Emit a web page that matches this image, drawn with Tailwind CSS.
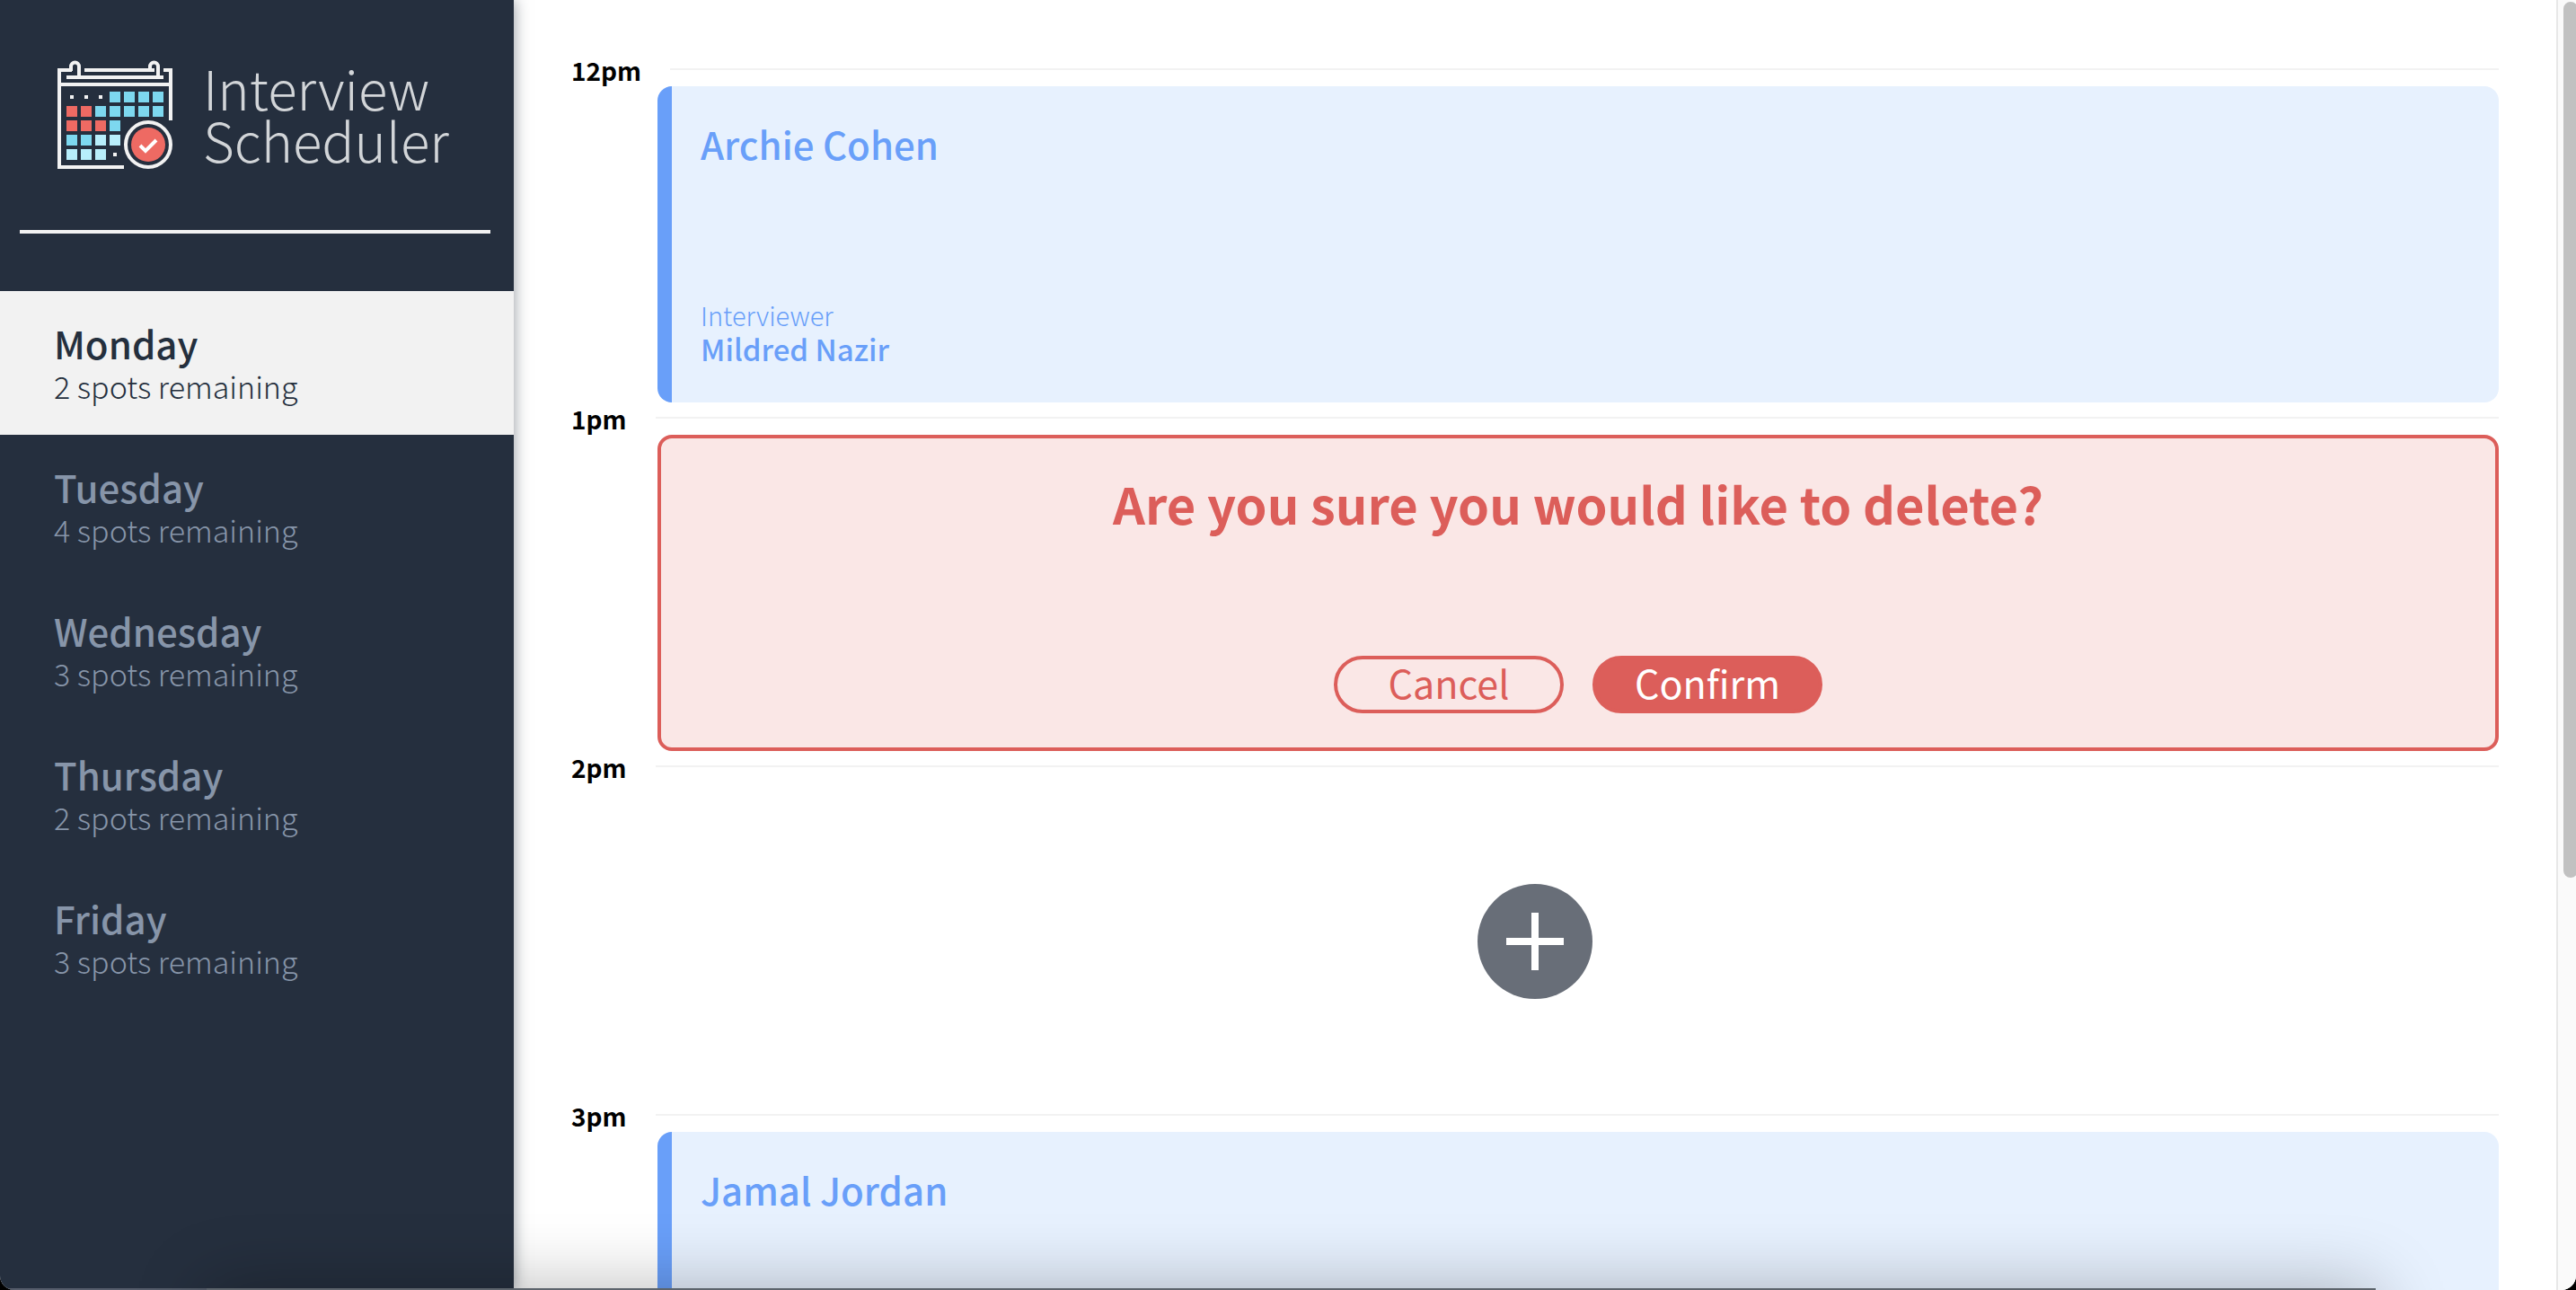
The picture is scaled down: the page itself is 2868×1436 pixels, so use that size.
<!DOCTYPE html>
<html lang="en">
<head>
<meta charset="utf-8">
<title>Interview Scheduler</title>
<script src="https://cdn.jsdelivr.net/npm/@tailwindcss/browser@4"></script>
</head>
<body class="h-screen overflow-hidden bg-black font-['Noto_Sans_CJK_SC',sans-serif] text-[#242f3d]">
<div class="relative flex h-full overflow-hidden rounded-b-2xl bg-white">
  <aside class="z-10 flex w-[572px] shrink-0 flex-col border-b-2 border-[#565d6b] bg-[#252f3e] shadow-[0_0_16px_rgba(37,47,62,0.5)]">
    <a href="#" class="flex gap-[34px] px-16 pt-[66px] text-[#d2d5d8]">
      <svg class="h-[124px] w-32 shrink-0" viewBox="64 66 128 124" role="img" aria-label="Calendar" fill="none">
        <g stroke="#f2f2f2" stroke-width="4">
          <path d="M94 78H172M182 78H190V134M64 78H80M66 76V186H138M74 86H182M68 94H190"/>
          <path d="M79 79V74a4.500 4.500 0 0 1 9 0V86M167 79V74a4.500 4.500 0 0 1 9 0V86"/>
          <circle cx="165" cy="161" r="25"/>
        </g>
        <path fill="#f2f2f2" d="M78 106h4v4h-4zM94 106h4v4h-4zM110 106h4v4h-4zM126 170h4v4h-4z"/>
        <path fill="#7dd8ef" d="M122 102h12v12h-12zM138 102h12v12h-12zM154 102h12v12h-12zM170 102h12v12h-12zM106 118h12v12h-12zM122 118h12v12h-12zM138 118h12v12h-12zM154 118h12v12h-12zM170 118h12v12h-12zM122 134h12v12h-12zM74 150h12v12h-12zM90 150h12v12h-12z"/>
        <path fill="#ee6a63" d="M74 118h12v12h-12zM90 118h12v12h-12zM74 134h12v12h-12zM90 134h12v12h-12zM106 134h12v12h-12z"/>
        <path fill="#b8eefb" d="M106 150h12v12h-12zM122 150h12v12h-12zM74 166h12v12h-12zM90 166h12v12h-12zM106 166h12v12h-12z"/>
        <circle cx="165" cy="161" r="19" fill="#ee6a63"/>
        <path stroke="#fff" stroke-width="4" d="M156 162l6 6 12-12"/>
      </svg>
      <span class="pt-0.5 text-[60px]/[58px] font-light">Interview<br>Scheduler</span>
    </a>
    <hr class="mt-[66px] mr-[26px] ml-[22px] border-t-4 border-[#f2f2f2]">
    <nav class="mt-16 flex flex-col text-[#8795a9]">
      <a href="#" class="flex h-40 flex-col justify-center bg-[#f2f2f2] px-[60px] pt-1 text-[#242f3d]"><span class="text-[42px]/[48px] font-medium">Monday</span><span class="text-[34px]/[48px] font-light">2 spots remaining</span></a>
      <a href="#" class="flex h-40 flex-col justify-center px-[60px] pt-1"><span class="text-[42px]/[48px] font-medium">Tuesday</span><span class="text-[34px]/[48px] font-light">4 spots remaining</span></a>
      <a href="#" class="flex h-40 flex-col justify-center px-[60px] pt-1"><span class="text-[42px]/[48px] font-medium">Wednesday</span><span class="text-[34px]/[48px] font-light">3 spots remaining</span></a>
      <a href="#" class="flex h-40 flex-col justify-center px-[60px] pt-1"><span class="text-[42px]/[48px] font-medium">Thursday</span><span class="text-[34px]/[48px] font-light">2 spots remaining</span></a>
      <a href="#" class="flex h-40 flex-col justify-center px-[60px] pt-1"><span class="text-[42px]/[48px] font-medium">Friday</span><span class="text-[34px]/[48px] font-light">3 spots remaining</span></a>
    </nav>
  </aside>

  <main class="min-w-0 flex-1 overflow-hidden px-16 pt-[60px] text-[#699ff9]">
    <section class="h-[388px]">
      <header class="flex h-9 text-black"><h4 class="min-w-[94px] pr-8 text-[28px]/[36px] font-bold">12pm</h4><hr class="mt-4 flex-1 border-t-2 border-[#f2f2f2]"></header>
      <article class="ml-24 flex h-[352px] flex-col justify-between rounded-2xl border-l-16 border-[#699ff9] bg-[#e7f1fe] px-8 pt-8 pb-10">
        <h2 class="text-[42px]/[64px] font-medium">Archie Cohen</h2>
        <section><h4 class="text-[29px]/[36px] font-light">Interviewer</h4><h3 class="text-[33px]/[40px] font-medium">Mildred Nazir</h3></section>
      </article>
    </section>

    <section class="h-[388px]">
      <header class="flex h-9 text-black"><h4 class="min-w-[94px] text-[28px]/[36px] font-bold">1pm</h4><hr class="mt-4 flex-1 border-t-2 border-[#f2f2f2]"></header>
      <article class="ml-24 flex h-[352px] flex-col items-center justify-between rounded-2xl border-4 border-[#dc5e5a] bg-[#fae7e6] px-8 pt-8 pb-[38px] text-[#dc5e5a]">
        <h1 class="text-[56px]/[80px] font-bold">Are you sure you would like to delete?</h1>
        <div class="flex gap-8">
          <button class="h-16 w-64 rounded-full border-4 border-[#dc5e5a] pb-1.5 text-[43px]/[50px]">Cancel</button>
          <button class="h-16 w-64 rounded-full border-4 border-[#dc5e5a] bg-[#dc5e5a] pb-1.5 text-[43px]/[50px] text-white">Confirm</button>
        </div>
      </article>
    </section>

    <section class="h-[388px]">
      <header class="flex h-9 text-black"><h4 class="min-w-[94px] text-[28px]/[36px] font-bold">2pm</h4><hr class="mt-4 flex-1 border-t-2 border-[#f2f2f2]"></header>
      <div class="flex h-[352px] items-center justify-center">
        <button aria-label="Add appointment" class="size-32">
          <svg viewBox="0 0 128 128" class="size-32"><circle cx="64" cy="64" r="64" fill="#686e78"/><path d="M64 32V96M32 64H96" stroke="#fff" stroke-width="8"/></svg>
        </button>
      </div>
    </section>

    <section class="h-[388px]">
      <header class="flex h-9 text-black"><h4 class="min-w-[94px] text-[28px]/[36px] font-bold">3pm</h4><hr class="mt-4 flex-1 border-t-2 border-[#f2f2f2]"></header>
      <article class="ml-24 flex h-[352px] flex-col justify-between rounded-2xl border-l-16 border-[#699ff9] bg-[#e7f1fe] px-8 pt-8 pb-10">
        <h2 class="text-[42px]/[64px] font-medium">Jamal Jordan</h2>
      </article>
    </section>
  </main>

  <div class="flex w-[22px] shrink-0 overflow-hidden border-l-2 border-[#e8e8e8] bg-[#fafafa] pt-0.5 pl-1.5" aria-hidden="true">
    <div class="h-[68%] w-4 shrink-0 rounded-full bg-[#c1c1c1]"></div>
  </div>

  <!-- Top edge and shadow of the dock under the window -->
  <div class="pointer-events-none absolute right-[223px] -bottom-[158px] left-[230px] z-20 h-40 bg-[#5d646c] shadow-[0_0_80px_rgba(0,0,0,0.28)]"></div>
</div>
</body>
</html>
